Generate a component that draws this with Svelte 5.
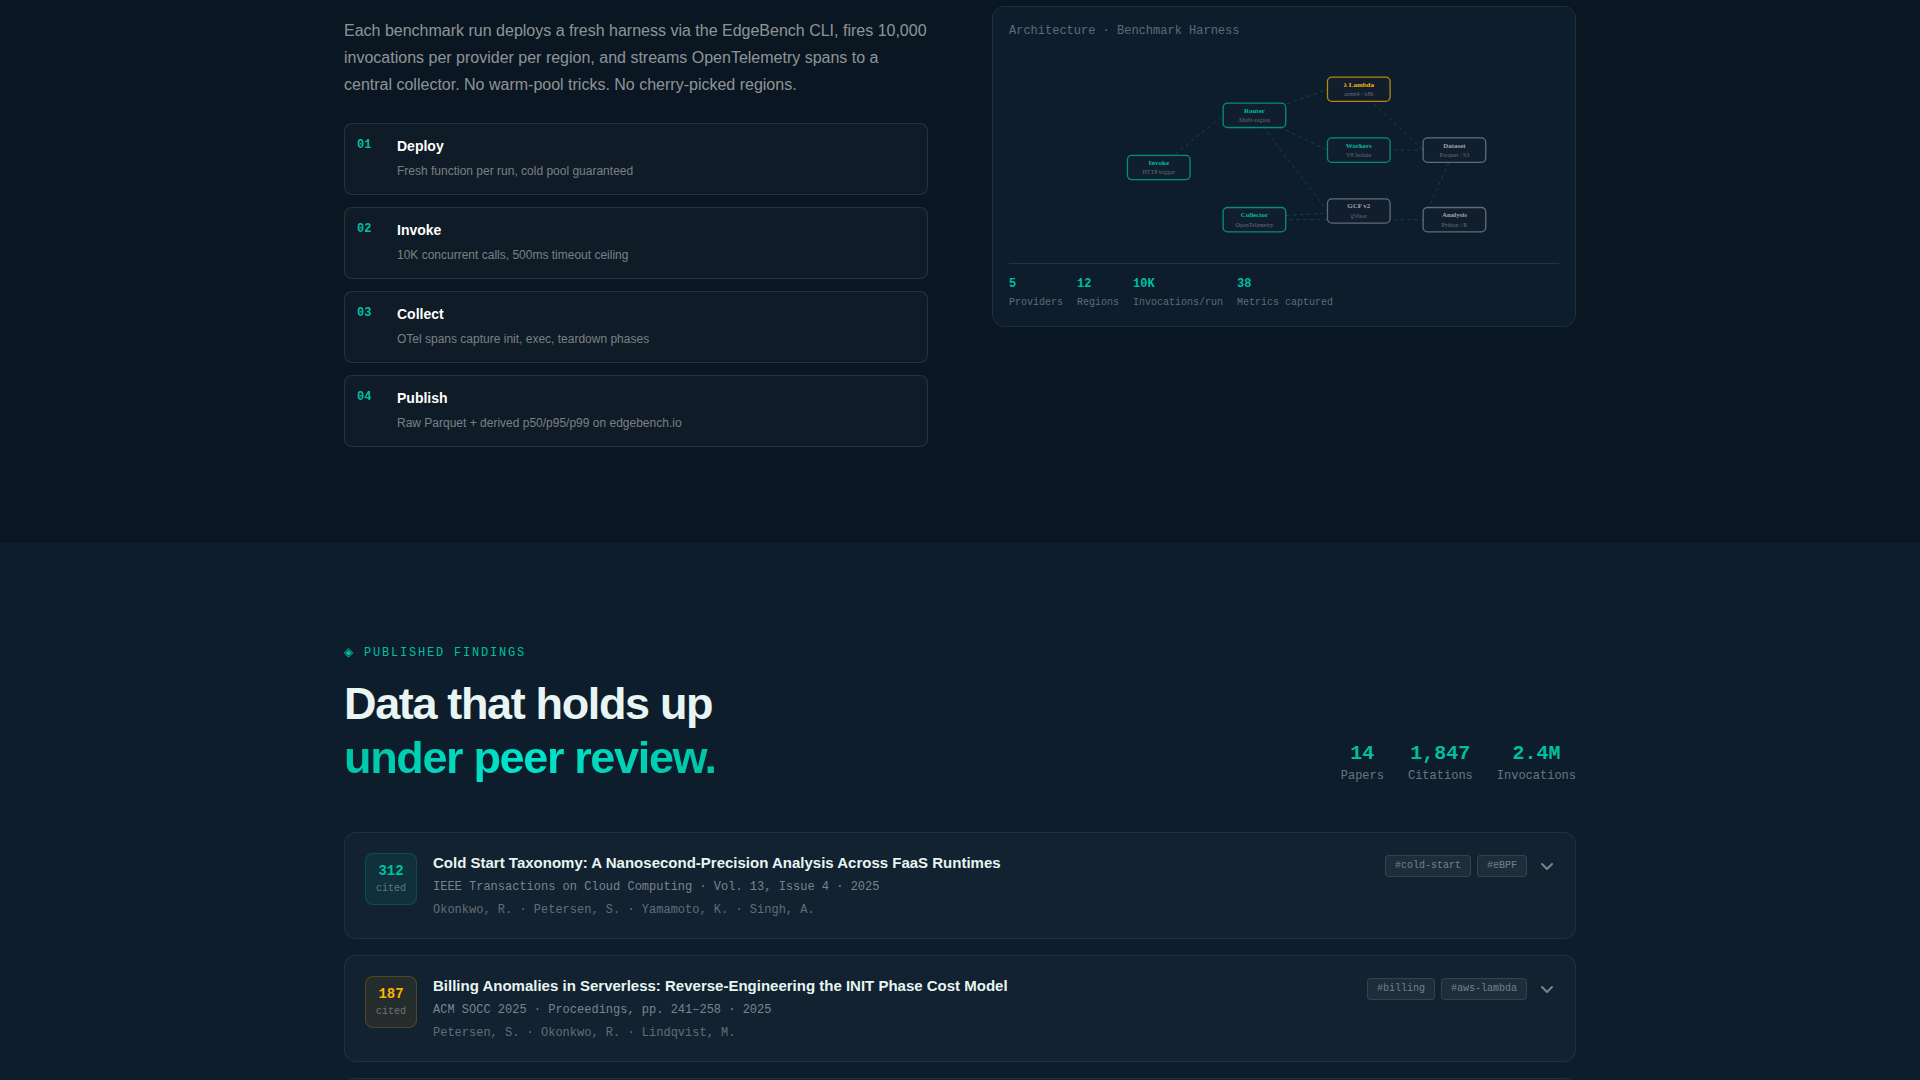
<script lang="ts">
	interface Node {
		id: string;
		label: string;
		sub: string;
		x: number;
		y: number;
		tone: 'teal' | 'amber' | 'grey';
	}

	interface Publication {
		cited: number;
		tone: 'teal' | 'amber';
		title: string;
		venue: string;
		authors: string;
		tags: string[];
	}

	const NODE_W = 72;
	const NODE_H = 28;

	const steps = [
		{ num: '01', title: 'Deploy', desc: 'Fresh function per run, cold pool guaranteed' },
		{ num: '02', title: 'Invoke', desc: '10K concurrent calls, 500ms timeout ceiling' },
		{ num: '03', title: 'Collect', desc: 'OTel spans capture init, exec, teardown phases' },
		{ num: '04', title: 'Publish', desc: 'Raw Parquet + derived p50/p95/p99 on edgebench.io' }
	];

	const nodes: Node[] = [
		{ id: 'invoke', label: 'Invoke', sub: 'HTTP trigger', x: 70, y: 120, tone: 'teal' },
		{ id: 'router', label: 'Router', sub: 'Multi-region', x: 180, y: 60, tone: 'teal' },
		{ id: 'lambda', label: 'λ Lambda', sub: 'arm64 / x86', x: 300, y: 30, tone: 'amber' },
		{ id: 'workers', label: 'Workers', sub: 'V8 Isolate', x: 300, y: 100, tone: 'teal' },
		{ id: 'gcf', label: 'GCF v2', sub: 'gVisor', x: 300, y: 170, tone: 'grey' },
		{ id: 'collector', label: 'Collector', sub: 'OpenTelemetry', x: 180, y: 180, tone: 'teal' },
		{ id: 'dataset', label: 'Dataset', sub: 'Parquet / S3', x: 410, y: 100, tone: 'grey' },
		{ id: 'analysis', label: 'Analysis', sub: 'Python / R', x: 410, y: 180, tone: 'grey' }
	];

	const links = [
		['invoke', 'router'],
		['router', 'lambda'],
		['router', 'workers'],
		['router', 'gcf'],
		['lambda', 'dataset'],
		['workers', 'dataset'],
		['gcf', 'collector'],
		['collector', 'analysis'],
		['dataset', 'analysis']
	];

	// edges leave from a node's centre and arrive at the next node's left side
	const edges = links.map(([from, to]) => {
		const a = nodes.find((n) => n.id === from)!;
		const b = nodes.find((n) => n.id === to)!;
		return { x1: a.x + NODE_W / 2, y1: a.y + NODE_H / 2, x2: b.x, y2: b.y + NODE_H / 2 };
	});

	const harnessStats = [
		{ value: '5', label: 'Providers' },
		{ value: '12', label: 'Regions' },
		{ value: '10K', label: 'Invocations/run' },
		{ value: '38', label: 'Metrics captured' }
	];

	const totals = [
		{ value: '14', label: 'Papers' },
		{ value: '1,847', label: 'Citations' },
		{ value: '2.4M', label: 'Invocations' }
	];

	const publications: Publication[] = [
		{
			cited: 312,
			tone: 'teal',
			title: 'Cold Start Taxonomy: A Nanosecond-Precision Analysis Across FaaS Runtimes',
			venue: 'IEEE Transactions on Cloud Computing · Vol. 13, Issue 4 · 2025',
			authors: 'Okonkwo, R. · Petersen, S. · Yamamoto, K. · Singh, A.',
			tags: ['#cold-start', '#eBPF']
		},
		{
			cited: 187,
			tone: 'amber',
			title: 'Billing Anomalies in Serverless: Reverse-Engineering the INIT Phase Cost Model',
			venue: 'ACM SOCC 2025 · Proceedings, pp. 241–258 · 2025',
			authors: 'Petersen, S. · Okonkwo, R. · Lindqvist, M.',
			tags: ['#billing', '#aws-lambda']
		}
	];
</script>

<div class="page">
	<section class="method">
		<div class="container method-grid">
			<div>
				<p class="intro">
					Each benchmark run deploys a fresh harness via the EdgeBench CLI, fires 10,000
					invocations per provider per region, and streams OpenTelemetry spans to a central
					collector. No warm-pool tricks. No cherry-picked regions.
				</p>
				<ol class="steps">
					{#each steps as step (step.num)}
						<li class="step">
							<span class="step-num">{step.num}</span>
							<div>
								<h3 class="step-title">{step.title}</h3>
								<p class="step-desc">{step.desc}</p>
							</div>
						</li>
					{/each}
				</ol>
			</div>

			<div class="harness">
				<div class="harness-title">Architecture · Benchmark Harness</div>
				<svg class="diagram" viewBox="0 0 500 230">
					{#each edges as edge}
						<line class="edge" x1={edge.x1} y1={edge.y1} x2={edge.x2} y2={edge.y2} />
					{/each}
					{#each nodes as node (node.id)}
						<g class="node {node.tone}">
							<rect x={node.x} y={node.y} width={NODE_W} height={NODE_H} rx="5" />
							<text class="node-label" x={node.x + 36} y={node.y + 11}>{node.label}</text>
							<text class="node-sub" x={node.x + 36} y={node.y + 22}>{node.sub}</text>
						</g>
					{/each}
				</svg>
				<div class="harness-stats">
					{#each harnessStats as stat (stat.label)}
						<div>
							<div class="harness-value">{stat.value}</div>
							<div class="harness-label">{stat.label}</div>
						</div>
					{/each}
				</div>
			</div>
		</div>
	</section>

	<section class="findings">
		<div class="container">
			<div class="findings-head">
				<div>
					<div class="eyebrow"><span class="eyebrow-mark">◈</span> Published Findings</div>
					<h2 class="heading">Data that holds up<br /><span class="accent">under peer review.</span></h2>
				</div>
				<div class="totals">
					{#each totals as total (total.label)}
						<div class="total">
							<div class="total-value">{total.value}</div>
							<div class="total-label">{total.label}</div>
						</div>
					{/each}
				</div>
			</div>

			<div class="papers">
				{#each publications as pub (pub.title)}
					<article class="paper">
						<div class="cited {pub.tone}">
							<span class="cited-count">{pub.cited}</span>
							<span class="cited-label">cited</span>
						</div>
						<div class="paper-body">
							<h3 class="paper-title">{pub.title}</h3>
							<p class="paper-venue">{pub.venue}</p>
							<p class="paper-authors">{pub.authors}</p>
						</div>
						<div class="paper-side">
							<div class="tags">
								{#each pub.tags as tag (tag)}
									<span class="tag">{tag}</span>
								{/each}
							</div>
							<button class="expand" type="button" aria-label="Show abstract">
								<svg viewBox="0 0 16 16" width="16" height="16">
									<path d="M3 6l5 5 5-5" />
								</svg>
							</button>
						</div>
					</article>
				{/each}
				<article class="paper next"></article>
			</div>
		</div>
	</section>
</div>

<style>
	:global(body) {
		background: #0a1621;
	}

	.page {
		--sans: 'Liberation Sans', Arial, sans-serif;
		--mono: 'Liberation Mono', 'Courier New', monospace;
		--teal: #00bfa0;
		--amber: #ffb300;
		height: 100vh;
		overflow: hidden;
		font-family: var(--sans);
		color: #e8f5f2;
	}

	.page :is(h2, h3, p, ol) {
		margin: 0;
		padding: 0;
	}

	.container {
		max-width: 1232px;
		margin: 0 auto;
		padding: 0 24px;
	}

	.method {
		padding: 6px 0 96px;
		background: #0a1621;
	}

	.method-grid {
		display: grid;
		grid-template-columns: 1fr 1fr;
		gap: 64px;
		align-items: start;
	}

	.page .intro {
		padding-top: 11px;
		margin-bottom: 25px;
		font-size: 16px;
		line-height: 27px;
		color: rgba(255, 255, 255, 0.55);
	}

	.steps {
		display: flex;
		flex-direction: column;
		gap: 12px;
		list-style: none;
	}

	.step {
		display: flex;
		gap: 12px;
		padding: 12px;
		background: rgba(255, 255, 255, 0.025);
		border: 1px solid rgba(255, 255, 255, 0.1);
		border-radius: 8px;
	}

	.step-num {
		width: 28px;
		font: bold 12px/18px var(--mono);
		color: var(--teal);
	}

	.page .step-title {
		margin-bottom: 4px;
		font-size: 14px;
		line-height: 20px;
		color: #fff;
	}

	.step-desc {
		font-size: 12px;
		line-height: 22px;
		color: rgba(255, 255, 255, 0.45);
	}

	.harness {
		padding: 16px;
		background: #0d1d2c;
		border: 1px solid #1b3040;
		border-radius: 12px;
	}

	.harness-title {
		margin-bottom: 12px;
		font: 12px/16px var(--mono);
		color: rgba(255, 255, 255, 0.35);
	}

	.diagram {
		display: block;
		width: 100%;
		height: 200px;
	}

	.edge {
		stroke: rgba(0, 191, 160, 0.3);
		stroke-width: 1;
		stroke-dasharray: 4 4;
	}

	.node rect {
		fill: #111e2d;
		stroke-width: 1.5;
	}

	.node text {
		font-family: 'Liberation Serif', serif;
		text-anchor: middle;
	}

	.node-label {
		font-size: 8px;
		font-weight: bold;
	}

	.node-sub {
		font-size: 7px;
		fill: rgba(255, 255, 255, 0.35);
	}

	.node.teal rect {
		stroke: rgba(0, 191, 160, 0.7);
	}

	.node.teal .node-label {
		fill: var(--teal);
	}

	.node.amber rect {
		stroke: rgba(255, 179, 0, 0.7);
	}

	.node.amber .node-label {
		fill: var(--amber);
	}

	.node.grey rect {
		stroke: rgba(255, 255, 255, 0.35);
	}

	.node.grey .node-label {
		fill: rgba(255, 255, 255, 0.6);
	}

	.harness-stats {
		display: flex;
		gap: 14px;
		margin-top: 12px;
		padding-top: 12px;
		border-top: 1px solid rgba(255, 255, 255, 0.1);
	}

	.harness-value {
		margin-bottom: 4px;
		font: bold 12px/16px var(--mono);
		color: var(--teal);
	}

	.harness-label {
		font: 10px/14px var(--mono);
		color: rgba(255, 255, 255, 0.35);
	}

	.findings {
		padding: 96px 0;
		background: #0d1d2c;
	}

	.findings-head {
		display: flex;
		justify-content: space-between;
		align-items: flex-end;
		margin-bottom: 47px;
	}

	.eyebrow {
		margin-bottom: 11px;
		font: 12px/26px var(--mono);
		letter-spacing: 0.15em;
		text-transform: uppercase;
		color: var(--teal);
	}

	.eyebrow-mark {
		font-family: 'DejaVu Sans', sans-serif;
	}

	.heading {
		font-size: 45px;
		font-weight: bold;
		line-height: 54px;
		letter-spacing: -0.03em;
	}

	.accent {
		background: linear-gradient(135deg, #00bfa0, #00e5cc 50%, #00bfa0);
		-webkit-background-clip: text;
		background-clip: text;
		color: transparent;
	}

	.totals {
		display: flex;
		gap: 24px;
		text-align: center;
	}

	.total-value {
		font: bold 20px/26px var(--mono);
		color: var(--teal);
	}

	.total-label {
		font: 12px/18px var(--mono);
		color: rgba(255, 255, 255, 0.4);
	}

	.papers {
		display: flex;
		flex-direction: column;
		gap: 16px;
	}

	.paper {
		display: flex;
		align-items: flex-start;
		gap: 16px;
		padding: 20px;
		background: rgba(255, 255, 255, 0.025);
		border: 1px solid rgba(255, 255, 255, 0.07);
		border-radius: 12px;
	}

	.paper.next {
		min-height: 65px;
	}

	.cited {
		display: flex;
		flex-direction: column;
		align-items: center;
		justify-content: center;
		box-sizing: border-box;
		width: 52px;
		height: 52px;
		border: 1px solid;
		border-radius: 8px;
		font-family: var(--mono);
	}

	.cited.teal {
		color: var(--teal);
		background: rgba(0, 191, 160, 0.1);
		border-color: rgba(0, 191, 160, 0.2);
	}

	.cited.amber {
		color: var(--amber);
		background: rgba(255, 179, 0, 0.08);
		border-color: rgba(255, 179, 0, 0.2);
	}

	.cited-count {
		font-size: 14px;
		font-weight: bold;
		line-height: 20px;
	}

	.cited-label {
		font-size: 10px;
		line-height: 16px;
		color: rgba(255, 255, 255, 0.35);
	}

	.paper-body {
		flex: 1;
		min-width: 0;
	}

	.page .paper-title {
		margin-bottom: 5px;
		font-size: 15px;
		line-height: 20px;
	}

	.paper-venue {
		font: 12px/18px var(--mono);
		color: rgba(255, 255, 255, 0.45);
	}

	.page .paper-authors {
		margin-top: 6px;
		font: 12px/16px var(--mono);
		color: rgba(255, 255, 255, 0.35);
	}

	.paper-side {
		display: flex;
		align-items: center;
		gap: 12px;
		padding-top: 2px;
	}

	.tags {
		display: flex;
		gap: 6px;
	}

	.tag {
		padding: 0 9px;
		font: 10px/20px var(--mono);
		color: rgba(255, 255, 255, 0.4);
		background: rgba(255, 255, 255, 0.05);
		border: 1px solid rgba(255, 255, 255, 0.1);
		border-radius: 4px;
	}

	.expand {
		display: flex;
		padding: 0;
		background: none;
		border: 0;
		color: rgba(255, 255, 255, 0.45);
		cursor: pointer;
	}

	.expand path {
		fill: none;
		stroke: currentColor;
		stroke-width: 2;
		stroke-linecap: round;
		stroke-linejoin: round;
	}
</style>
